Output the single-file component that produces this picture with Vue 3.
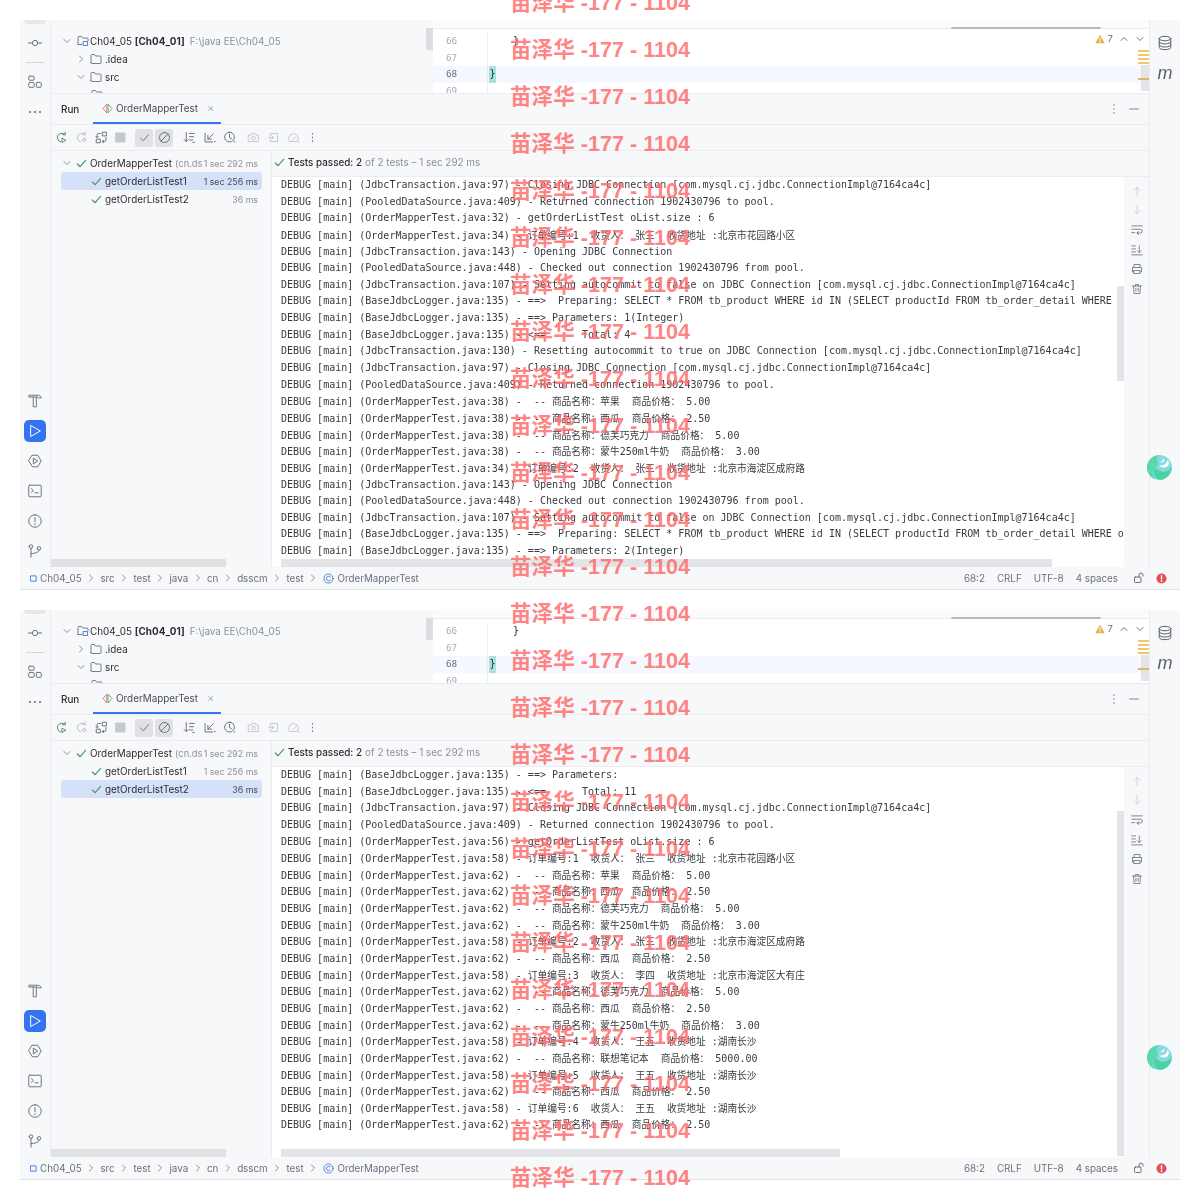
<script setup>
const closing = '(JdbcTransaction.java:97) - Closing JDBC Connection [com.mysql.cj.jdbc.ConnectionImpl@7164ca4c]'
const returned = '(PooledDataSource.java:409) - Returned connection 1902430796 to pool.'
const opening = '(JdbcTransaction.java:143) - Opening JDBC Connection'
const checked = '(PooledDataSource.java:448) - Checked out connection 1902430796 from pool.'
const setting = '(JdbcTransaction.java:107) - Setting autocommit to false on JDBC Connection [com.mysql.cj.jdbc.ConnectionImpl@7164ca4c]'
const preparing = '(BaseJdbcLogger.java:135) - ==>  Preparing: SELECT * FROM tb_product WHERE id IN (SELECT productId FROM tb_order_detail WHERE orderId = ?)'
const item = (n, name, price) => `(OrderMapperTest.java:${n}) -  -- 商品名称：${name}  商品价格： ${price}`
const order = (n, id, who, addr) => `(OrderMapperTest.java:${n}) - 订单编号:${id}  收货人： ${who}  收货地址 :${addr}`

// CJK runs are set a little smaller than the Latin text, as in the console of the reference
const segments = (line) =>
  line.split(/([\u4e00-\u9fff：]+)/).filter(Boolean).map((text) => ({ text, cjk: /[\u4e00-\u9fff：]/.test(text) }))

const first = [
  closing, returned,
  '(OrderMapperTest.java:32) - getOrderListTest oList.size : 6',
  order(34, 1, '张三', '北京市花园路小区'),
  opening, checked, setting, preparing,
  '(BaseJdbcLogger.java:135) - ==> Parameters: 1(Integer)',
  '(BaseJdbcLogger.java:135) - <==      Total: 4',
  '(JdbcTransaction.java:130) - Resetting autocommit to true on JDBC Connection [com.mysql.cj.jdbc.ConnectionImpl@7164ca4c]',
  closing, returned,
  item(38, '苹果', '5.00'), item(38, '西瓜', '2.50'), item(38, '德芙巧克力', '5.00'), item(38, '蒙牛250ml牛奶', '3.00'),
  order(34, 2, '张三', '北京市海淀区成府路'),
  opening, checked, setting, preparing,
  '(BaseJdbcLogger.java:135) - ==> Parameters: 2(Integer)',
  '(BaseJdbcLogger.java:135) - <==      Total: 4'
]
const second = [
  '(BaseJdbcLogger.java:135) - ==> Parameters: ',
  '(BaseJdbcLogger.java:135) - <==      Total: 11',
  closing, returned,
  '(OrderMapperTest.java:56) - getOrderListTest oList.size : 6',
  order(58, 1, '张三', '北京市花园路小区'),
  item(62, '苹果', '5.00'), item(62, '西瓜', '2.50'), item(62, '德芙巧克力', '5.00'), item(62, '蒙牛250ml牛奶', '3.00'),
  order(58, 2, '张三', '北京市海淀区成府路'),
  item(62, '西瓜', '2.50'),
  order(58, 3, '李四', '北京市海淀区大有庄'),
  item(62, '德芙巧克力', '5.00'), item(62, '西瓜', '2.50'), item(62, '蒙牛250ml牛奶', '3.00'),
  order(58, 4, '王五', '湖南长沙'),
  item(62, '联想笔记本', '5000.00'),
  order(58, 5, '王五', '湖南长沙'),
  item(62, '西瓜', '2.50'),
  order(58, 6, '王五', '湖南长沙'),
  item(62, '西瓜', '2.50')
]
const windows = [
  { selected: 0, lines: first.map(segments), vTop: 109, vHeight: 95, hWidth: 771 },
  { selected: 1, lines: second.map(segments), vTop: 44, vHeight: 345, hWidth: 559 }
]
const crumbs = ['src', 'test', 'java', 'cn', 'dsscm', 'test']
const marks = Array.from({ length: 26 })

const g = '#6c707e'
const structure = 'M3 2.500h4a1 1 0 0 1 1 1v2.500a1 1 0 0 1-1 1H3a1 1 0 0 1-1-1V3.500a1 1 0 0 1 1-1zM3 9.500h4a1 1 0 0 1 1 1v3.500a1 1 0 0 1-1 1H3a1 1 0 0 1-1-1v-3.500a1 1 0 0 1 1-1zM11.500 9.500h3.500a1 1 0 0 1 1 1v3.500a1 1 0 0 1-1 1h-3.500a1 1 0 0 1-1-1v-3.500a1 1 0 0 1 1-1z'
const leftBottom = [
  'M2.500 2.500h10c1.800 0 3 1.200 3.500 3h-3.500l-1-1H2.500zM7 4.500V15.500h3.500V4.500',
  'M4.500 3 L15 9 L4.500 15z',
  'M6 2.500h6L16 9l-4 6.500H6L2 9zM7.500 6 L12 9 L7.500 12z',
  'M3 2.500h12a1 1 0 0 1 1 1v11a1 1 0 0 1-1 1H3a1 1 0 0 1-1-1v-11a1 1 0 0 1 1-1zM5 6.500l2.200 2-2.200 2M9 11h3.500',
  'M9 2a7 7 0 1 0 0 14a7 7 0 1 0 0-14zM9 5.200v4.800M9 12.300v.8',
  'M2.500 4a2 2 0 1 0 4 0a2 2 0 1 0-4 0zM11.500 6a2 2 0 1 0 4 0a2 2 0 1 0-4 0zM4.500 6V16M13.500 8c0 3-5 3.500-9 4'
]
const tools = [
  { w: 20, c: '#6c707e', d: 'M12.500 4.500A5.500 5.500 0 1 0 7 13.500M12.500 1.500v3h-3', extra: { c: '#4c9a5b', d: 'M9 9l4.500 2.500L9 14z' } },
  { w: 21, c: '#b9bcc6', d: 'M12.500 4.500A5.500 5.500 0 1 0 7 13.500M12.500 1.500v3h-3M9.500 11a2 2 0 1 0 4 0a2 2 0 1 0-4 0z' },
  { w: 19, c: g, d: 'M2.500 8V5a2 2 0 0 1 2-2h2.500M1 6.500L2.500 8 4 6.500M9.500 1.500h4.500v4.500H9.500zM2 10h4.500v4.500H2zM13.500 8v3a2 2 0 0 1-2 2H9M10.500 11.500L9 13l1.500 1.500' },
  { w: 19, c: '#c4c7cd', fill: true, d: 'M2.500 2.500h11v11h-11z' },
  { w: 4 },
  { w: 20, c: g, on: true, d: 'M3 8.500l3.500 3.500L13 4.500' },
  { w: 20, c: g, on: true, d: 'M8 1.800a6.200 6.200 0 1 0 0 12.400a6.200 6.200 0 1 0 0-12.400zM3.700 12.300L12.300 3.700' },
  { w: 5 },
  { w: 20, c: g, d: 'M4 2v11M1.500 10.500L4 13l2.500-2.500M8 3h6M8 7h5M8 11h4M12 14h2' },
  { w: 20, c: g, d: 'M2.500 3v10.500H12M12.500 3.500L6 10M6 5.500V10h4.500M14 13h1' },
  { w: 20, c: g, d: 'M8 1.500a6 6 0 1 0 0 12a6 6 0 1 0 0-12zM8 4v4l2.500 1.500M13.500 13.500h1' },
  { w: 4 },
  { w: 20, c: '#c4c7d0', d: 'M2 5h3l1-2h4l1 2h3v8H2zM8 6.500a2.200 2.200 0 1 0 0 4.400a2.200 2.200 0 1 0 0-4.400z' },
  { w: 20, c: '#c4c7d0', d: 'M4 6V3h9v10H4v-3M2 8h6M6 6l2 2-2 2' },
  { w: 20, c: '#c4c7d0', d: 'M3 12.500a6 6 0 1 1 10 0zM7.500 10.500l3.500-3.500M14 13.500h1' },
  { w: 18, c: g, d: 'M8 3v1M8 7.500v1M8 12v1' }
]
const side = [
  { c: '#c9ccd6', d: 'M8 14V3M4 7l4-4 4 4' },
  { c: '#c9ccd6', d: 'M8 2v11M4 9l4 4 4-4' },
  { c: g, d: 'M1 2.500h14M1 7h11.500a2.500 2.500 0 0 1 0 5H8M10 10l-2 2 2 2M1 11.500h4' },
  { c: g, d: 'M1 2.500h5M1 6.500h5M1 10.500h5M1 14.500h14M11 2.500v9M8.500 9L11 11.500 13.500 9' },
  { c: g, d: 'M4 6V2h8v4M2 6h12v6h-2M4 12H2V6M4 10h8v4H4z' },
  { c: g, d: 'M2 4h12M6 4V2h4v2M3.500 4l.5 10h8l.5-10M6.500 7v4M9.500 7v4' }
]
</script>

<template>
  <div class="page">
    <section v-for="(win, wi) in windows" :key="wi" class="window">
      <div class="body">
        <aside class="left">
          <div class="left-group">
            <span class="stub"></span>
            <svg class="lic first" viewBox="0 0 18 18"><path d="M1.500 9h4.500M12 9h4.500M6 9a3 3 0 1 0 6 0a3 3 0 1 0-6 0" /></svg>
            <span class="left-sep"></span>
            <svg class="lic" viewBox="0 0 18 18"><path :d="structure" /></svg>
            <svg class="dots" viewBox="0 0 14 4"><circle cx="2" cy="2" r="1.100" /><circle cx="7" cy="2" r="1.100" /><circle cx="12" cy="2" r="1.100" /></svg>
          </div>
          <div class="left-group bottom">
            <span v-for="(d, i) in leftBottom" :key="i" class="lbtn" :class="{ active: i === 1 }">
              <svg viewBox="0 0 18 18"><path :d="d" /></svg>
            </span>
          </div>
        </aside>

        <div class="center">
          <div class="top">
            <div class="project">
              <div class="prow l0">
                <svg class="chev" viewBox="0 0 8 8"><path d="M1 2.500l3 3 3-3" /></svg>
                <svg class="folder" viewBox="0 0 12 12"><path d="M1 9.500V2.500a1 1 0 0 1 1-1h2.500l1 1.500H10a1 1 0 0 1 1 1V6M1 9.500h4" /><rect x="6.500" y="6.500" width="4" height="4" class="mod" /></svg>
                <span class="pname">Ch04_05 <b>[Ch04_01]</b></span>
                <span class="ppath">F:\java EE\Ch04_05</span>
              </div>
              <div class="prow l1">
                <svg class="chev" viewBox="0 0 8 8"><path d="M2.500 1l3 3-3 3" /></svg>
                <svg class="folder" viewBox="0 0 12 12"><path d="M1 9.500V2.500a1 1 0 0 1 1-1h2.500l1 1.500H10a1 1 0 0 1 1 1v5.500a1 1 0 0 1-1 1H2a1 1 0 0 1-1-1z" /></svg>
                <span class="pname">.idea</span>
              </div>
              <div class="prow l1">
                <svg class="chev" viewBox="0 0 8 8"><path d="M1 2.500l3 3 3-3" /></svg>
                <svg class="folder" viewBox="0 0 12 12"><path d="M1 9.500V2.500a1 1 0 0 1 1-1h2.500l1 1.500H10a1 1 0 0 1 1 1v5.500a1 1 0 0 1-1 1H2a1 1 0 0 1-1-1z" /></svg>
                <span class="pname">src</span>
              </div>
              <div class="prow l2">
                <svg class="folder" viewBox="0 0 12 12"><path d="M1 9.500V2.500a1 1 0 0 1 1-1h2.500l1 1.500H10a1 1 0 0 1 1 1v5.500a1 1 0 0 1-1 1H2a1 1 0 0 1-1-1z" /></svg>
              </div>
            </div>
            <div class="editor">
              <span class="pj-thumb"></span>
              <span class="tab-thumb"></span>
              <div class="gutter">
                <div class="num">66</div>
                <div class="num">67</div>
                <div class="num cur">68</div>
                <div class="num">69</div>
              </div>
              <div class="code">
                <div class="cline"><span class="ind">}</span></div>
                <div class="cline"></div>
                <div class="cline cur"><span class="brace">}</span></div>
                <div class="cline"></div>
              </div>
              <div class="inspect">
                <svg class="warn" viewBox="0 0 10 10"><path d="M5 .8L9.700 9.200H.3z" /><path class="wl" d="M5 3.800v2.500M5 7.300v.8" /></svg>
                <span class="wcount">7</span>
                <svg class="up" viewBox="0 0 8 8"><path d="M1 5.500l3-3 3 3" /></svg>
                <svg class="up last" viewBox="0 0 8 8"><path d="M1 2.500l3 3 3-3" /></svg>
              </div>
              <div class="stripe">
                <i></i><i></i><i></i><i></i>
                <span class="stripe-thumb"><i></i></span>
              </div>
            </div>
          </div>

          <div class="tabs">
            <span class="run-label">Run</span>
            <div class="tab">
              <svg class="ticon" viewBox="0 0 12 12"><path class="tr" d="M5 1.500L1 6l4 4.500z" /><path class="tg" d="M7 1.500L11 6l-4 4.500z" /></svg>
              <span>OrderMapperTest</span>
              <span class="close">×</span>
            </div>
            <span class="spacer"></span>
            <svg class="tico" viewBox="0 0 16 16"><path d="M8 3v1M8 7.500v1M8 12v1" /></svg>
            <svg class="tico" viewBox="0 0 16 16"><path d="M3 8h10" /></svg>
          </div>

          <div class="toolbar">
            <template v-for="(t, i) in tools" :key="i">
              <span v-if="!t.d" class="tsep" :style="{ width: t.w + 'px' }"></span>
              <span v-else class="tbtn" :class="{ on: t.on }" :style="{ width: t.w + 'px' }">
                <svg viewBox="0 0 16 16" :style="{ stroke: t.c, fill: t.fill ? t.c : 'none' }">
                  <path :d="t.d" />
                  <path v-if="t.extra" :d="t.extra.d" :style="{ stroke: t.extra.c }" />
                </svg>
              </span>
            </template>
          </div>

          <div class="main">
            <div class="tree">
              <div class="trow root">
                <svg class="chev" viewBox="0 0 8 8"><path d="M1 2.500l3 3 3-3" /></svg>
                <svg class="check" viewBox="0 0 12 12"><path d="M1.500 6.500l3 3L10.500 2.500" /></svg>
                <span class="tname">OrderMapperTest</span>
                <span class="tpkg">(cn.ds</span>
                <span class="ttime">1 sec 292 ms</span>
              </div>
              <div class="trow leaf" :class="{ sel: win.selected === 0 }">
                <svg class="check" viewBox="0 0 12 12"><path d="M1.500 6.500l3 3L10.500 2.500" /></svg>
                <span class="tname">getOrderListTest1</span>
                <span class="ttime">1 sec 256 ms</span>
              </div>
              <div class="trow leaf" :class="{ sel: win.selected === 1 }">
                <svg class="check" viewBox="0 0 12 12"><path d="M1.500 6.500l3 3L10.500 2.500" /></svg>
                <span class="tname">getOrderListTest2</span>
                <span class="ttime">36 ms</span>
              </div>
              <span class="tree-hbar"></span>
            </div>

            <div class="output">
              <div class="passed">
                <svg class="check" viewBox="0 0 12 12"><path d="M1.500 6.500l3 3L10.500 2.500" /></svg>
                <span class="pass-strong">Tests passed: 2</span>
                <span class="pass-weak">of 2 tests – 1 sec 292 ms</span>
              </div>
              <div class="out-body">
                <div class="console">
                  <div v-for="(l, i) in win.lines" :key="i" class="log">DEBUG [main] <span v-for="(s, si) in l" :key="si" :class="{ cjk: s.cjk }">{{ s.text }}</span></div>
                  <span class="vbar" :style="{ top: win.vTop + 'px', height: win.vHeight + 'px' }"></span>
                  <span class="hbar" :style="{ width: win.hWidth + 'px' }"></span>
                </div>
                <div class="side">
                  <svg v-for="(s, i) in side" :key="i" viewBox="0 0 16 16" :style="{ stroke: s.c }"><path :d="s.d" /></svg>
                </div>
              </div>
            </div>
          </div>
        </div>

        <aside class="right">
          <svg class="db" viewBox="0 0 18 18"><ellipse cx="9" cy="4" rx="6.500" ry="2.500" /><path d="M2.500 4v10c0 1.400 2.900 2.500 6.500 2.500s6.500-1.100 6.500-2.500V4M2.500 7.500c0 1.400 2.900 2.500 6.500 2.500s6.500-1.100 6.500-2.500M2.500 11c0 1.400 2.900 2.500 6.500 2.500s6.500-1.100 6.500-2.500" /></svg>
          <span class="maven">m</span>
          <svg class="logo" viewBox="0 0 24 24">
            <circle cx="12" cy="12" r="12" fill="#86dbe0" />
            <path d="M11 .2C5 .6 0 5.600 0 12c0 5 3 9.500 7.500 11.200C5 19 5 15.500 8 12.500c2-2 3.500-2.500 2-5.500-1-2-.8-4.500 1-6.800z" fill="#58d8ac" />
            <path d="M9 12.500c2 3 4.500 4 8 3.500 3-.5 5.500-2.500 6.500-5C24 16 20 22 14 23.800 9 24 7 20 6.500 18 6 15.500 7 13.500 9 12.500z" fill="#48d3a0" />
            <path d="M11.500 9.500c4 1.500 7-.5 8.500-5 1 1.500 1.200 3.500.5 5-1.500 3-6 3.500-9 0z" fill="#ffffff" />
            <path d="M16 3c1 1 1 2.500 0 3.500-1 .8-2.500.8-3.500 0C14 6 15.500 5 16 3z" fill="#e8fbf7" />
          </svg>
        </aside>
      </div>

      <footer class="status">
        <svg class="smod" viewBox="0 0 8 8"><rect x="1" y="1" width="6" height="6" /></svg>
        <span class="crumb first">Ch04_05</span>
        <template v-for="c in crumbs" :key="c">
          <svg class="sep" viewBox="0 0 8 8"><path d="M2.500 1l3 3-3 3" /></svg>
          <span class="crumb">{{ c }}</span>
        </template>
        <svg class="sep" viewBox="0 0 8 8"><path d="M2.500 1l3 3-3 3" /></svg>
        <svg class="cls" viewBox="0 0 12 12"><circle cx="6" cy="6" r="5" /><path d="M8 4.300a2.500 2.500 0 1 0 0 3.400" /></svg>
        <span class="crumb cname">OrderMapperTest</span>
        <span class="spacer"></span>
        <span class="sinfo">68:2</span>
        <span class="sinfo">CRLF</span>
        <span class="sinfo">UTF-8</span>
        <span class="sinfo">4 spaces</span>
        <svg class="lock" viewBox="0 0 12 12"><rect x="1.500" y="5" width="6.500" height="5.500" rx="1" /><path d="M6 5V3a2 2 0 0 1 4 0v1" /></svg>
        <svg class="err" viewBox="0 0 12 12"><circle cx="6" cy="6" r="5.500" /><path d="M6 2.800v3.800M6 8.300v1" /></svg>
      </footer>
    </section>

    <div class="marks">
      <div v-for="(m, i) in marks" :key="i" class="mark">苗泽华 -177 - 1104</div>
    </div>
  </div>
</template>

<style>
html, body { margin: 0; background: #fff; }
</style>

<style scoped>
.page {
  position: relative;
  box-sizing: border-box;
  height: 1200px;
  overflow: hidden;
  padding: 20px 20px 0;
  display: flex;
  flex-direction: column;
  gap: 20px;
  font-family: Inter, "Noto Sans CJK SC", sans-serif;
  font-size: 9.900px;
  color: #2b2d30;
  background: #fff;
}
svg { fill: none; stroke-linecap: round; stroke-linejoin: round; flex: none; }
.window {
  height: 570px;
  box-sizing: border-box;
  display: flex;
  flex-direction: column;
  background: #f7f8fa;
  border-bottom: 1px solid #e2e3e6;
  filter: blur(0.35px);
}
.body { flex: 1; min-height: 0; display: flex; position: relative; }

.left {
  width: 30px;
  flex: none;
  display: flex;
  flex-direction: column;
  justify-content: space-between;
  align-items: center;
  border-right: 1px solid #ebecf0;
}
.left-group { display: flex; flex-direction: column; align-items: center; }
.stub { width: 22px; height: 4px; background: #e6e7ea; border-radius: 0 0 5px 5px; }
.lic { width: 16px; height: 16px; stroke: #6c707e; stroke-width: 1.100; }
.lic.first { margin-top: 11px; }
.left-sep { width: 18px; height: 1px; background: #d3d5db; margin: 11px 0; }
.dots { width: 14px; height: 4px; margin-top: 20px; }
.dots circle { fill: #6c707e; }
.left-group.bottom { gap: 8px; padding-bottom: 5px; }
.lbtn { width: 22px; height: 22px; border-radius: 5px; display: flex; align-items: center; justify-content: center; }
.lbtn svg { width: 16px; height: 16px; stroke: #6c707e; stroke-width: 1.100; }
.lbtn.active { background: #3574f0; }
.lbtn.active svg { stroke: #fff; }

.center { flex: 1; min-width: 0; display: flex; flex-direction: column; }
.top { height: 74px; flex: none; display: flex; overflow: hidden; border-bottom: 1px solid #ebecf0; box-sizing: border-box; }
.project { width: 382px; flex: none; padding-top: 12px; box-sizing: border-box; }
.prow { height: 18px; display: flex; align-items: center; white-space: nowrap; flex: none; }
.prow.l0 { padding-left: 12px; }
.prow.l1 { padding-left: 26px; }
.prow.l2 { padding-left: 40px; }
.chev { width: 8px; height: 8px; stroke: #8c909c; stroke-width: 1; margin-right: 3px; }
.folder { width: 12px; height: 12px; stroke: #6c707e; stroke-width: .9; margin-right: 3px; }
.folder .mod { stroke: #3574f0; }
.l0 .chev { margin-right: 6px; }
.l0 .folder { margin-right: 1px; }
.l1 .chev { margin-right: 5px; }
.pname { color: #2b2d30; }
.pname b { font-weight: 700; letter-spacing: .05px; }
.ppath { color: #8c909c; margin-left: 5px; font-size: 9.900px; }

.editor { flex: 1; display: flex; position: relative; background: #fff; padding-top: 13px; min-width: 0; }
.editor::before { content: ""; position: absolute; left: 0; right: 0; top: 0; height: 8px; background: #fbfbfc; border-bottom: 1px solid #ebecf0; }
.pj-thumb { position: absolute; left: -7px; top: 8px; width: 7px; height: 22px; background: #dcdde0; }
.tab-thumb { position: absolute; left: 518px; top: 7px; width: 150px; height: 2px; background: #b5b8c5; border-radius: 1px; }
.gutter { width: 55px; flex: none; border-right: 1px solid #ebecf0; box-sizing: border-box; }
.num { height: 16.500px; line-height: 16.500px; padding-left: 13px; color: #a8adbd; font-family: "DejaVu Sans Mono", monospace; font-size: 9.300px; }
.num.cur { color: #6c707e; background: #f5f8fe; }
.code { flex: 1; min-width: 0; font-family: "DejaVu Sans Mono", monospace; font-size: 10px; }
.cline { height: 16.500px; line-height: 16.500px; padding-left: 1px; }
.cline.cur { background: #f5f8fe; }
.ind { padding-left: 24px; }
.brace { display: inline-block; background: #a9e1df; width: 7px; text-align: center; }
.inspect { position: absolute; right: 5px; top: 13px; display: flex; align-items: center; }
.warn { width: 10px; height: 10px; }
.warn path { fill: #e9ae3c; }
.warn .wl { stroke: #fff; stroke-width: 1; fill: none; }
.wcount { margin: 0 7px 0 3px; color: #6c707e; font-size: 9.500px; }
.up { width: 8px; height: 8px; stroke: #6c707e; margin-right: 8px; }
.up.last { margin-right: 0; }
.stripe { position: absolute; right: 0; top: 30px; width: 11px; display: flex; flex-direction: column; }
.stripe > i { display: block; height: 2px; margin-bottom: 2px; background: #efc56d; }
.stripe-thumb { display: block; margin: -1px 0 0 3px; height: 26px; background: #e3e4e7; position: relative; }
.stripe-thumb i { position: absolute; left: -3px; right: 0; top: 13px; height: 2px; background: #e0b665; }

.tabs { height: 31px; flex: none; display: flex; align-items: center; box-sizing: border-box; border-bottom: 1px solid #ebecf0; padding: 0 8px 0 10px; }
.run-label { font-weight: 500; width: 32px; }
.tab { align-self: stretch; width: 128px; box-sizing: border-box; border-bottom: 2px solid #3574f0; display: flex; align-items: center; padding-left: 9px; color: #494b57; }
.ticon { width: 11px; height: 11px; margin-right: 3px; stroke-width: .9; }
.ticon .tr { stroke: #db5c5c; }
.ticon .tg { stroke: #59a869; }
.close { color: #a8adbd; margin-left: 9px; font-size: 11px; }
.spacer { flex: 1; }
.tico { width: 14px; height: 14px; stroke: #6c707e; margin-left: 6px; }

.toolbar { height: 26px; flex: none; display: flex; align-items: center; box-sizing: border-box; border-bottom: 1px solid #ebecf0; }
.tsep { display: block; flex: none; }
.tbtn { height: 18px; display: flex; align-items: center; justify-content: center; flex: none; border-radius: 3px; }
.tbtn.on { background: #dfe1e5; width: 18px !important; margin: 0 1px; }
.tbtn svg { width: 13px; height: 13px; stroke-width: 1.200; }

.main { flex: 1; min-height: 0; display: flex; }
.tree { width: 221px; flex: none; position: relative; padding-top: 3px; box-sizing: border-box; border-right: 1px solid #ebecf0; }
.trow { height: 18px; display: flex; align-items: center; white-space: nowrap; margin: 0 9px 0 10px; padding-right: 4px; }
.trow.root { padding-left: 2px; }
.trow.root .chev { margin-right: 5px; }
.trow.leaf { padding-left: 30px; border-radius: 3px; }
.trow.sel { background: #d5e1f9; }
.check { width: 11px; height: 11px; stroke: #4c9a5b; stroke-width: 1.300; margin-right: 3px; }
.tname { color: #2b2d30; }
.tpkg { color: #8c909c; margin-left: 3px; overflow: hidden; width: 27px; flex: none; font-size: 9.300px; }
.ttime { margin-left: auto; color: #8c909c; font-size: 8.800px; }
.sel .ttime { color: #494b57; }
.tree-hbar { position: absolute; left: 0; bottom: 0; width: 175px; height: 8px; background: #e0e1e3; }

.output { flex: 1; min-width: 0; display: flex; flex-direction: column; }
.passed { height: 26px; flex: none; display: flex; align-items: center; padding: 0 0 3px 2px; box-sizing: border-box; border-bottom: 1px solid #ebecf0; }
.passed .check { margin-right: 3px; }
.pass-strong { color: #2b2d30; font-weight: 500; }
.pass-weak { color: #8c909c; margin-left: 3px; }
.out-body { flex: 1; min-height: 0; display: flex; }
.console { flex: 1; min-width: 0; background: #fff; overflow: hidden; position: relative; padding-left: 9px; font-family: "DejaVu Sans Mono", "Noto Sans CJK SC", monospace; font-size: 10px; color: #383a42; }
.log { height: 16.650px; line-height: 16.650px; white-space: pre; }
.cjk { font-family: "Noto Sans CJK SC", sans-serif; font-size: 9.700px; }
.vbar { position: absolute; right: 0; width: 7px; background: #e3e4e7; }
.hbar { position: absolute; left: 9px; bottom: 0; height: 8px; background: #e3e4e7; }
.side { width: 25px; flex: none; display: flex; flex-direction: column; align-items: center; gap: 7.700px; padding-top: 7.500px; box-sizing: border-box; }
.side svg { width: 12px; height: 12px; stroke-width: 1.100; }

.right { width: 31px; flex: none; border-left: 1px solid #ebecf0; box-sizing: border-box; display: flex; flex-direction: column; align-items: center; padding-top: 15px; position: relative; }
.db { width: 16px; height: 16px; stroke: #5a5d6b; stroke-width: 1.100; }
.maven { font-family: "Liberation Sans", sans-serif; font-style: italic; font-size: 18px; line-height: 20px; margin-top: 12px; color: #5a5d6b; }
.logo { position: absolute; left: -3px; top: 435px; width: 25px; height: 25px; }

.status { height: 22px; flex: none; display: flex; align-items: center; padding: 0 13px 0 10px; color: #6c707e; font-size: 9.800px; white-space: nowrap; }
.smod { width: 7px; height: 7px; stroke: #3574f0; margin-right: 3px; }
.sep { width: 8px; height: 8px; stroke: #8c909c; margin: 0 5.400px; }
.cls { width: 11px; height: 11px; stroke: #4682c8; margin: 0 3px 0 1px; }
.sinfo { margin-left: 12px; }
.lock { width: 12px; height: 12px; stroke: #6c707e; margin-left: 15px; }
.err { width: 11px; height: 11px; margin-left: 11px; }
.err circle { fill: #e0505a; stroke: none; }
.err path { stroke: #fff; stroke-width: 1.500; }

.marks { position: absolute; left: 510px; top: -21.500px; pointer-events: none; }
.mark { height: 47px; line-height: 47px; font-family: "Liberation Sans", "Noto Sans CJK SC", sans-serif; font-size: 21.600px; font-weight: 700; color: rgba(255, 110, 110, .85); white-space: nowrap; }
</style>
